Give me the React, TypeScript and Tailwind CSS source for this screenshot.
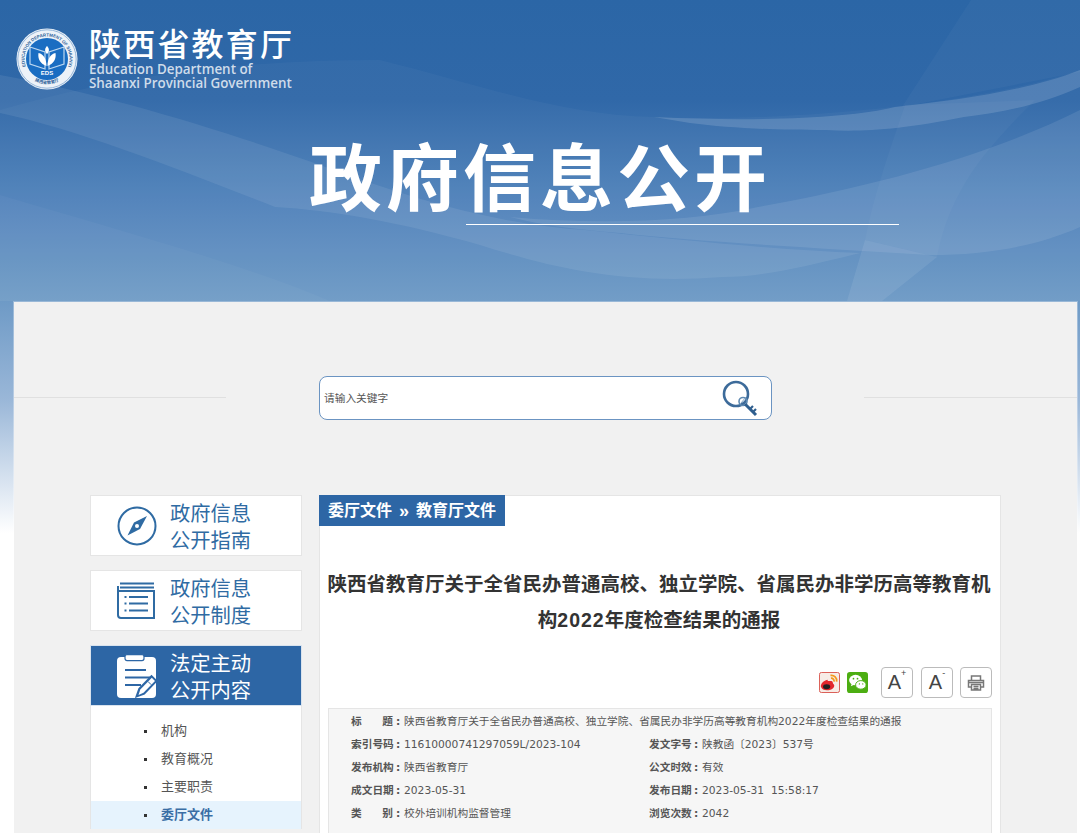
const font = { fontFamily: '"Liberation Sans","Noto Sans CJK SC",sans-serif' };
const metaFont = { fontFamily: '"DejaVu Sans","Noto Sans CJK SC",sans-serif' };
const enFont = { fontFamily: '"Open Sans",sans-serif' };

function Logo() {
  return (
    <svg width="62" height="62" viewBox="0 0 62 62" className="shrink-0">
      <defs>
        <path id="ringTop" d="M12.600 43.900A22.500 22.500 0 1 1 49.400 43.900" />
        <path id="ringBottom" d="M10 45a25.500 25.500 0 0 0 42 0" />
      </defs>
      <circle cx="31" cy="31" r="30.500" fill="#edf2f8" />
      <circle cx="31" cy="31" r="29.200" fill="none" stroke="#6f9ccb" strokeWidth="0.700" />
      <text fontSize="4.400" fontWeight="700" fill="#2c5f99" style={font}>
        <textPath href="#ringTop" startOffset="50%" textAnchor="middle">EDUCATION DEPARTMENT OF SHAANXI</textPath>
      </text>
      <text fontSize="4.200" fontWeight="700" fill="#2c5f99" style={font}>
        <textPath href="#ringBottom" startOffset="50%" textAnchor="middle">陕西省教育厅</textPath>
      </text>
      <circle cx="31" cy="31" r="21" fill="#1a6dc2" />
      <path d="M14 19l15 5v17l-15-5zM48 19l-15 5v17l15-5z" fill="none" stroke="#bcd7f0" strokeWidth="1.200" />
      <path d="M30.500 38c-6-2-9-7-8-13 5 1 8 6 8 13zM31.500 38c6-2 9-7 8-13-5 1-8 6-8 13z" fill="#fff" />
      <path d="M31 26c-3-3-2-6 0-8 2 2 3 5 0 8z" fill="#fff" />
      <text x="31" y="47" fontSize="6" fontWeight="700" fill="#fff" textAnchor="middle" style={font}>EDS</text>
    </svg>
  );
}

function Sky() {
  return (
    <svg className="absolute inset-0 h-full w-full" viewBox="0 0 1080 301" preserveAspectRatio="none">
      <path d="M380 60C480 85 560 115 654 117 760 122 960 110 1080 70V301H0V110C140 70 260 60 380 60Z" fill="#ffffff" opacity="0.03" />
      <path d="M0 75C110 95 230 133 320 165 415 200 500 225 585 230 680 240 780 250 860 253 800 268 760 277 723 277 620 285 550 267 480 245 400 222 330 210 275 207 180 170 80 130 0 113Z" fill="#ffffff" opacity="0.08" />
      <path d="M654 117C760 122 850 118 895 107 960 100 1030 90 1080 70V87C1040 105 1000 113 964 117 900 130 860 132 826 130 770 130 730 128 690 123Z" fill="#ffffff" opacity="0.14" />
      <path d="M510 217C600 225 690 222 758 207 880 185 990 155 1080 110V227C1040 245 990 255 930 255 820 248 700 242 620 233 580 230 540 225 510 217Z" fill="#ffffff" opacity="0.09" />
      <path d="M971 0H1080V72L902 107Z" fill="#ffffff" opacity="0.03" />
      <path d="M905 105L1035 100C985 150 950 190 937 257L865 240C875 190 890 150 905 105Z" fill="#ffffff" opacity="0.03" />
      <path d="M865 240L937 257 882 301H847Z" fill="#ffffff" opacity="0.08" />
      <path d="M0 195C120 230 260 270 330 301H0Z" fill="#ffffff" opacity="0.03" />
    </svg>
  );
}

function Compass() {
  return (
    <svg width="40" height="40" viewBox="0 0 40 40">
      <circle cx="20" cy="20" r="18.500" fill="none" stroke="#2f6ba3" strokeWidth="2" />
      <path d="M30 10L17 16.500 10.500 29.500 23 23Z" fill="#2f6ba3" />
      <circle cx="20" cy="20" r="2" fill="#fff" />
    </svg>
  );
}

function ListIcon() {
  return (
    <svg width="38" height="38" viewBox="0 0 38 38" fill="none" stroke="#2f6ba3" strokeWidth="2">
      <path d="M1 4V33a3 3 0 0 0 3 3H37V9H1" />
      <path d="M3 1.500H37M3 5.500H37" />
      <path d="M12 15H31M12 21.500H31M12 28.500H31" />
      <path d="M7.500 15H9.500M7.500 21.500H9.500M7.500 28.500H9.500" />
    </svg>
  );
}

function ClipIcon() {
  return (
    <svg width="39" height="44" viewBox="0 0 39 44">
      <rect x="0" y="3" width="39" height="41" rx="4" fill="#fff" />
      <rect x="8" y="0.600" width="19" height="6" rx="2" fill="#fff" stroke="#2d66a5" strokeWidth="1.200" />
      <path d="M8 16H29M8 23.500H33M8 31H24" stroke="#2d66a5" strokeWidth="2.200" />
      <path d="M20 42l2.500-7 12-12.500 4.500 4.500-12 12.500Z" fill="#2d66a5" stroke="#2d66a5" strokeWidth="2.500" />
      <path d="M21.500 41l1.800-5.500 11.500-11.800 3.200 3.200-11.500 11.800Z" fill="#fff" />
      <path d="M31 27.500l3.200 3.200" stroke="#2d66a5" strokeWidth="1" />
    </svg>
  );
}

function KeyIcon() {
  return (
    <svg width="38" height="38" viewBox="0 0 38 38" fill="none">
      <circle cx="15" cy="15" r="12" stroke="#3d6b9a" strokeWidth="2.600" />
      <circle cx="22" cy="22.500" r="4" stroke="#5f8ab2" strokeWidth="1.600" />
      <path d="M24 25L35 36" stroke="#2f5f8f" strokeWidth="3" />
      <path d="M29 30l3-3M32 33l3-3" stroke="#2f5f8f" strokeWidth="2.200" />
      <path d="M20 24l5-6" stroke="#7fa3c4" strokeWidth="1" />
    </svg>
  );
}

function Weibo() {
  return (
    <svg width="21" height="21" viewBox="0 0 22 22">
      <rect x="0.500" y="0.500" width="21" height="21" rx="2" fill="#f7ece6" stroke="#d9574f" />
      <path d="M9 8C4 9 1.500 13 2 15.500 3 19 8 20 12 18.500 16 17 17 14 15 12.500 14 11.500 15 10 13 9.500 11 9 9 10.500 9 8Z" fill="#e3272d" />
      <ellipse cx="8" cy="15.500" rx="3.800" ry="2.600" fill="#222" />
      <path d="M12 3.500C16 3 19 6 18.500 10M12.500 6.500C14.500 6.300 16 8 15.800 10" fill="none" stroke="#f39a1d" strokeWidth="1.800" />
    </svg>
  );
}

function Wechat() {
  return (
    <svg width="21" height="21" viewBox="0 0 22 22">
      <rect width="22" height="22" rx="3" fill="#4cae12" />
      <ellipse cx="9" cy="8.500" rx="6.800" ry="5.500" fill="#fff" />
      <path d="M5 12l-1 3 4-2Z" fill="#fff" />
      <ellipse cx="14.500" cy="13.500" rx="5.500" ry="4.500" fill="#fff" stroke="#4cae12" />
      <circle cx="6.800" cy="7" r="0.900" fill="#4cae12" />
      <circle cx="11" cy="7" r="0.900" fill="#4cae12" />
      <circle cx="13" cy="12.500" r="0.700" fill="#4cae12" />
      <circle cx="16.500" cy="12.500" r="0.700" fill="#4cae12" />
    </svg>
  );
}

function Printer() {
  return (
    <svg width="18" height="18" viewBox="0 0 18 18" fill="none" stroke="#777" strokeWidth="1.500">
      <path d="M4.500 6V2h9v4M4.500 13H1.500V6.500h15V13h-3" />
      <path d="M4.500 10.500h9V16h-9zM6.500 12.500h5M6.500 14.500h5M2 8.500h14" />
    </svg>
  );
}

function SideCard({ icon, a, b, active }: { icon: React.ReactNode; a: string; b: string; active?: boolean }) {
  return (
    <div className={active ? "flex h-[61px] items-center border border-[#d9e3ee] bg-[#2d66a5] pl-[26px] text-white" : "flex h-[61px] items-center border border-[#e5e5e5] bg-white pl-[26px] text-[#2f6ba3]"}>
      <div className="flex w-[53px] justify-start">{icon}</div>
      <div className="pt-[4px] text-[20.300px] leading-[27px]">
        <div>{a}</div>
        <div>{b}</div>
      </div>
    </div>
  );
}

function MenuItem({ t, active }: { t: string; active?: boolean }) {
  return (
    <div className={active ? "flex h-[28px] items-center bg-[#e6f3fd] pl-[53px] text-[13px] font-bold text-[#3a6ea5]" : "flex h-[28px] items-center pl-[53px] text-[13px] text-[#555]"}>
      <span className="mr-[14px] h-[3px] w-[3px] bg-[#333]" />
      {t}
    </div>
  );
}

function Meta({ k, v }: { k: React.ReactNode; v: string }) {
  return (
    <div style={metaFont} className="flex h-[23px] items-center whitespace-nowrap text-[10.700px] text-[#555]">
      <span className="flex w-[42px] justify-between font-bold text-[#555]">{k}</span>
      <span className="w-[11px] pl-[3px] font-bold">:</span>
      <span>{v}</span>
    </div>
  );
}

export default function App() {
  return (
    <div style={font} className="h-[833px] w-[1080px] overflow-hidden bg-[linear-gradient(180deg,#2b66a6_0px,#3068a8_100px,#5082ba_200px,#6e9ac6_301px,#9ab7d8_400px,#ffffff_533px)]">
      <header className="relative h-[301px]">
        <Sky />
        <div className="relative flex items-center pl-[16px] pt-[28px]">
          <Logo />
          <div className="ml-[11px]">
            <div className="text-[32px] font-medium leading-[34px] tracking-[2.200px] text-white">陕西省教育厅</div>
            <div style={enFont} className="text-[13.400px] font-semibold leading-[14px] text-[#cfdcea]">Education Department of</div>
            <div style={enFont} className="text-[13.400px] font-semibold leading-[14px] text-[#cfdcea]">Shaanxi Provincial Government</div>
          </div>
        </div>
        <div className="relative mt-[49px] flex justify-center">
          <h1 className="text-[73px] font-bold leading-[82px] tracking-[4px] text-white">政府信息公开</h1>
        </div>
        <div className="relative ml-[466px] mt-[3px] h-px w-[433px] bg-white" />
      </header>
      <main className="ml-[13px] h-[532px] w-[1065px] border-x border-t border-white/30 bg-[#f1f1f1] bg-clip-padding">
        <div className="flex items-center pt-[74px]">
          <div className="-mt-[2px] h-px w-[212px] bg-[#e0e0e0]" />
          <div className="ml-[93px] flex h-[44px] w-[453px] items-center justify-between rounded-[8px] border border-[#6b94c2] bg-white pl-[4px] pr-[12px] text-[10.700px] text-[#555]">
            <span>请输入关键字</span>
            <KeyIcon />
          </div>
          <div className="-mt-[2px] ml-[92px] h-px w-[213px] bg-[#e0e0e0]" />
        </div>
        <div className="ml-[76px] mt-[75px] flex items-start gap-[17px]">
          <aside className="flex w-[212px] flex-col">
            <SideCard icon={<Compass />} a="政府信息" b="公开指南" />
            <div className="mt-[14px]">
              <SideCard icon={<ListIcon />} a="政府信息" b="公开制度" />
            </div>
            <div className="mt-[14px] border-x border-[#e5e5e5] bg-white">
              <div className="-mx-px">
                <SideCard icon={<ClipIcon />} a="法定主动" b="公开内容" active />
              </div>
              <div className="pt-[11px]">
                <MenuItem t="机构" />
                <MenuItem t="教育概况" />
                <MenuItem t="主要职责" />
                <MenuItem t="委厅文件" active />
              </div>
            </div>
          </aside>
          <section className="h-[400px] w-[682px] border border-[#e5e5e5] bg-white">
            <div className="-ml-px -mt-px flex h-[31px] w-[186px] items-center whitespace-nowrap bg-[#2d66a5] pl-[9px] text-[16px] font-bold text-white">
              委厅文件<span className="mx-[7px] text-[18px] leading-none">»</span>教育厅文件
            </div>
            <h2 className="mt-[40px] pl-[6px] pr-[8px] text-center text-[19.500px] font-bold leading-[36px] text-[#333]">
              陕西省教育厅关于全省民办普通高校、独立学院、省属民办非学历高等教育机构<span className="tracking-[1px]">2022</span>年度检查结果的通报
            </h2>
            <div className="mt-[29px] flex items-center justify-end pr-[8px]">
              <Weibo />
              <span className="ml-[7px]"><Wechat /></span>
              <div className="ml-[13px] flex h-[31px] w-[32px] items-start justify-center rounded-[4px] border border-[#bbb] pt-[3px] text-[20px] leading-[23px] text-[#444]">A<sup className="mt-[2px] text-[9px] leading-none">+</sup></div>
              <div className="ml-[8px] flex h-[31px] w-[32px] items-start justify-center rounded-[4px] border border-[#bbb] pt-[3px] text-[20px] leading-[23px] text-[#444]">A<sup className="mt-[2px] text-[9px] leading-none">-</sup></div>
              <div className="ml-[7px] flex h-[31px] w-[32px] items-center justify-center rounded-[4px] border border-[#bbb]"><Printer /></div>
            </div>
            <div className="mx-[8px] mt-[10px] h-[200px] border border-[#e5e5e5] bg-[#f6f6f6] pl-[22px] pt-[2px]">
              <Meta k={<><span>标</span><span>题</span></>} v="陕西省教育厅关于全省民办普通高校、独立学院、省属民办非学历高等教育机构2022年度检查结果的通报" />
              <div className="grid grid-cols-[298px_1fr]">
                <Meta k="索引号码" v="11610000741297059L/2023-104" />
                <Meta k="发文字号" v="陕教函〔2023〕537号" />
                <Meta k="发布机构" v="陕西省教育厅" />
                <Meta k="公文时效" v="有效" />
                <Meta k="成文日期" v="2023-05-31" />
                <Meta k="发布日期" v={"2023-05-31\u00a0 15:58:17"} />
                <Meta k={<><span>类</span><span>别</span></>} v="校外培训机构监督管理" />
                <Meta k="浏览次数" v="2042" />
              </div>
            </div>
          </section>
        </div>
      </main>
    </div>
  );
}
